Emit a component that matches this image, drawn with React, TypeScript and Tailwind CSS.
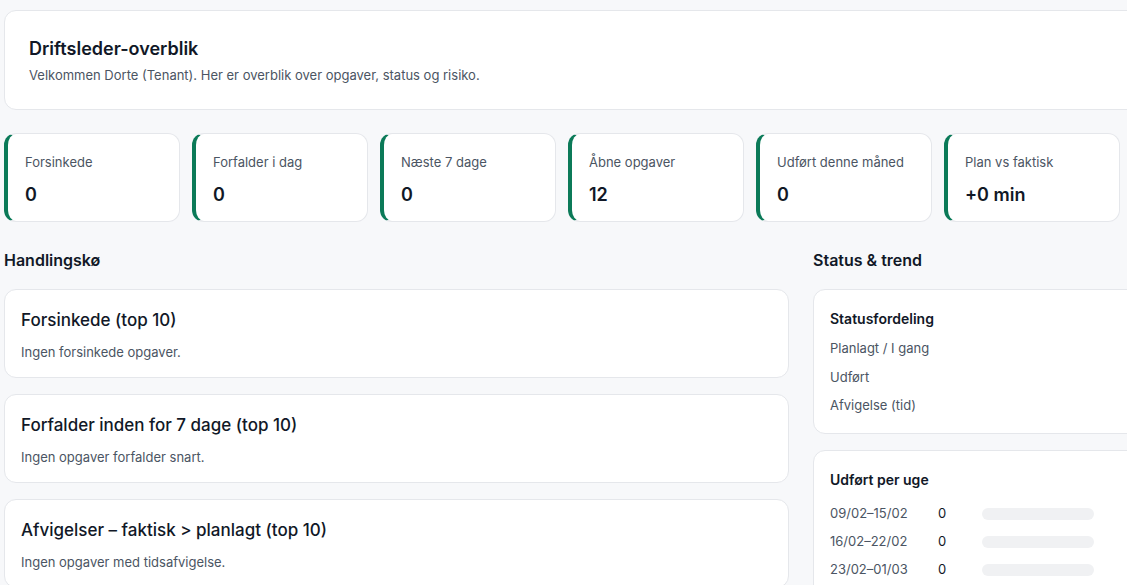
import React from 'react'

export default function App() {
  const kpis = [
    { label: 'Forsinkede', value: '0' },
    { label: 'Forfalder i dag', value: '0' },
    { label: 'Næste 7 dage', value: '0' },
    { label: 'Åbne opgaver', value: '12' },
    { label: 'Udført denne måned', value: '0' },
    { label: 'Plan vs faktisk', value: '+0 min' },
  ]
  const queue = [
    { title: 'Forsinkede (top 10)', text: 'Ingen forsinkede opgaver.' },
    { title: 'Forfalder inden for 7 dage (top 10)', text: 'Ingen opgaver forfalder snart.' },
    { title: 'Afvigelser – faktisk > planlagt (top 10)', text: 'Ingen opgaver med tidsafvigelse.' },
  ]
  const weeks = ['09/02–15/02', '16/02–22/02', '23/02–01/03']

  return (
    <div className="min-h-[585px] bg-[#f7f8fa] pl-1 pt-[10px] text-[#111827] overflow-hidden" style={{ fontFamily: 'Inter, "Noto Sans", sans-serif' }}>
      <div className="w-[1140px] h-[100px] bg-white border border-[#e5e7eb] rounded-xl px-6 pt-[26px]">
        <h1 className="text-[18px] font-semibold leading-6">Driftsleder-overblik</h1>
        <p className="text-[13px] text-[#4b5563] mt-[5px]">Velkommen Dorte (Tenant). Her er overblik over opgaver, status og risiko.</p>
      </div>

      <div className="flex gap-3 mt-[23px]">
        {kpis.map((k) => (
          <div key={k.label} className="w-[176px] shrink-0 h-[89px] bg-white border border-[#e5e7eb] border-l-4 border-l-[#0b7a58] rounded-xl pl-[17px] pt-[19px]">
            <div className="text-[13px] text-[#4b5563]">{k.label}</div>
            <div className="text-[18px] font-semibold mt-[8px]">{k.value}</div>
          </div>
        ))}
      </div>

      <div className="flex gap-6 mt-[26px]">
        <div className="w-[785px] shrink-0">
          <h2 className="text-[16px] font-semibold leading-6">Handlingskø</h2>
          <div className="flex flex-col gap-4 mt-[17px]">
            {queue.map((q) => (
              <div key={q.title} className="h-[89px] bg-white border border-[#e5e7eb] rounded-xl px-4 pt-[18px]">
                <div className="text-[17px] font-medium">{q.title}</div>
                <div className="text-[13px] text-[#4b5563] mt-[9px]">{q.text}</div>
              </div>
            ))}
          </div>
        </div>
        <div className="w-[340px] shrink-0">
          <h2 className="text-[16px] font-semibold leading-6">Status &amp; trend</h2>
          <div className="mt-[17px] h-[145px] bg-white border border-[#e5e7eb] rounded-xl px-4 pt-[18px]">
            <div className="text-[14px] font-semibold">Statusfordeling</div>
            <div className="flex flex-col gap-[9px] mt-[10px] text-[13px] text-[#4b5563]">
              <div>Planlagt / I gang</div>
              <div>Udført</div>
              <div>Afvigelse (tid)</div>
            </div>
          </div>
          <div className="mt-4 h-[160px] bg-white border border-[#e5e7eb] rounded-xl px-4 pt-[18px]">
            <div className="text-[14px] font-semibold">Udført per uge</div>
            <div className="flex flex-col gap-[9px] mt-[14px] text-[13px]">
              {weeks.map((w) => (
                <div key={w} className="flex items-center h-[19px]">
                  <span className="w-[108px] text-[#4b5563]">{w}</span>
                  <span className="w-[44px]">0</span>
                  <div className="w-[112px] h-3 rounded-md bg-[#f0f1f3]"></div>
                </div>
              ))}
            </div>
          </div>
        </div>
      </div>
    </div>
  )
}
